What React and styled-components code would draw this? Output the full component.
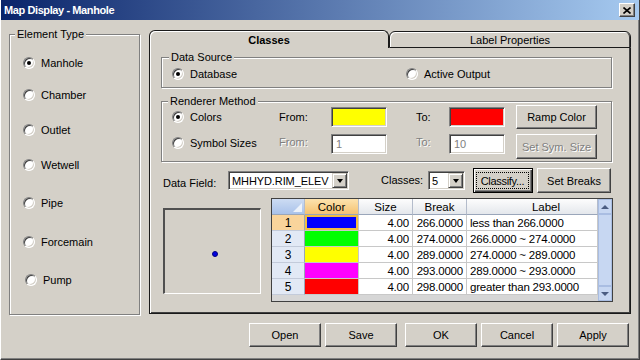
import React from "react";
import styled, { createGlobalStyle } from "styled-components";

const GlobalStyle = createGlobalStyle`
  html, body { margin: 0; padding: 0; background: #d4d0c8; }
  body { font-family: "Liberation Sans", Arial, sans-serif; font-size: 11px; color: #000; }
  * { box-sizing: border-box; }
`;

const Window = styled.div`
  width: 640px;
  height: 360px;
  background: #d4d0c8;
  border-left: 1px solid #fff;
  border-right: 1px solid #404040;
  border-bottom: 1px solid #404040;
  box-shadow: inset -1px -1px 0 #808080;
  display: flex;
  flex-direction: column;
  overflow: hidden;
`;

const TitleBar = styled.div`
  height: 20px;
  flex: none;
  display: flex;
  align-items: center;
  justify-content: space-between;
  padding: 0 4px 0 3px;
  background: linear-gradient(to right, #0a246a, #a6caf0);
  color: #fff;
  font-weight: bold;
  font-size: 11px;
  letter-spacing: -0.4px;
`;

const CloseButton = styled.div`
  width: 16px;
  height: 14px;
  background: #d4d0c8;
  border: 1px solid;
  border-color: #fff #404040 #404040 #fff;
  box-shadow: inset -1px -1px 0 #808080;
  display: flex;
  align-items: center;
  justify-content: center;
`;

const Main = styled.div`
  display: flex;
  align-items: flex-start;
  height: 295px;
  flex: none;
  padding: 8px 0 0 8px;
`;

const GroupBox = styled.div`
  flex: none;
  width: ${p => p.$w}px;
  height: ${p => p.$h}px;
  margin-top: ${p => p.$mt || 0}px;
  border: 1px solid #808080;
  box-shadow: 1px 1px 0 #fff, inset 1px 1px 0 #fff;
`;

const Caption = styled.div`
  width: fit-content;
  margin: -7px 0 0 ${p => p.$ml}px;
  padding: 0 2px;
  line-height: 13px;
  background: #d4d0c8;
`;

const RadioList = styled.div`
  display: flex;
  flex-direction: column;
  padding-left: 13px;
`;

const Option = styled.div`
  display: flex;
  align-items: center;
  gap: 6px;
  height: ${p => p.$h || 13}px;
  margin-top: ${p => p.$mt || 0}px;
  padding-left: ${p => p.$indent || 0}px;
  white-space: nowrap;
`;

const Radio = styled.span`
  flex: none;
  width: 12px;
  height: 12px;
  border-radius: 50%;
  border: 1px solid;
  border-color: #808080 #fff #fff #808080;
  background: #fff;
  box-shadow: inset 1px 1px 0 #404040, inset -1px -1px 0 #d4d0c8;
  display: flex;
  align-items: center;
  justify-content: center;
  &::after {
    content: "";
    width: 4px;
    height: 4px;
    border-radius: 50%;
    background: ${p => (p.$checked ? "#000" : "transparent")};
  }
`;

const Tabs = styled.div`
  flex: none;
  width: 482px;
  height: 284px;
  margin: 2px 0 0 9px;
  display: flex;
  flex-direction: column;
`;

const TabStrip = styled.div`
  display: flex;
  align-items: flex-end;
  height: 18px;
  flex: none;
`;

const Tab = styled.div`
  width: ${p => p.$w}px;
  height: ${p => (p.$active ? 18 : 17)}px;
  border: 1px solid #1a1a1a;
  border-bottom: ${p => (p.$active ? "none" : "1px solid #1a1a1a")};
  border-radius: 6px 6px 0 0;
  box-shadow: ${p => (p.$active ? "inset 1px 1px 0 #fff" : "inset 1px 1px 0 #fff, inset -1px 0 0 #404040")};
  display: flex;
  align-items: center;
  justify-content: center;
  font-weight: ${p => (p.$active ? "bold" : "normal")};
  padding-top: ${p => (p.$active ? 1 : 0)}px;
`;

const Panel = styled.div`
  flex: 1;
  border: 1px solid #1a1a1a;
  border-top: none;
  box-shadow: inset 1px 0 0 #fff, inset -1px -1px 0 #404040;
  padding: 9px 0 0 11px;
`;

const SourceRow = styled.div`
  display: grid;
  grid-template-columns: 234px auto;
  margin-top: 3px;
  padding-left: 10px;
`;

const RendererRow = styled.div`
  display: grid;
  grid-template-columns: 107px 52px 56px 29px 33px 56px 11px 81px;
  height: ${p => p.$h}px;
  align-items: ${p => p.$align};
  margin-top: ${p => p.$mt}px;
  padding-left: 10px;
`;

const Text = styled.span`
  line-height: ${p => p.$lh || 13}px;
  color: ${p => (p.$disabled ? "#808080" : "#000")};
  text-shadow: ${p => (p.$disabled ? "1px 1px 0 #fff" : "none")};
  width: ${p => (p.$w ? `${p.$w}px` : "auto")};
  margin-left: ${p => p.$ml || 0}px;
  padding-top: ${p => p.$pt || 0}px;
  flex: none;
  white-space: nowrap;
`;

const Sunken = styled.div`
  width: ${p => p.$w}px;
  height: ${p => p.$h}px;
  background: ${p => p.$bg || "#fff"};
  border: 1px solid;
  border-color: #808080 #fff #fff #808080;
  box-shadow: inset 1px 1px 0 #404040, inset -1px -1px 0 #d4d0c8;
  color: #808080;
  padding-left: 4px;
  line-height: 18px;
  flex: none;
  margin-left: ${p => p.$ml || 0}px;
`;

const Button = styled.div`
  flex: none;
  width: ${p => p.$w}px;
  height: ${p => p.$h || 24}px;
  margin-left: ${p => p.$ml || 0}px;
  display: flex;
  align-items: center;
  justify-content: center;
  background: #d4d0c8;
  border: 1px solid;
  border-color: ${p => (p.$focus ? "#000" : "#fff #404040 #404040 #fff")};
  box-shadow: ${p =>
    p.$focus
      ? "inset 1px 1px 0 #fff, inset -1px -1px 0 #404040, inset -2px -2px 0 #808080"
      : "inset -1px -1px 0 #808080"};
  color: ${p => (p.$disabled ? "#808080" : "#000")};
  text-shadow: ${p => (p.$disabled ? "1px 1px 0 #fff" : "none")};
  white-space: nowrap;
`;

const FocusRing = styled.span`
  flex: 1;
  align-self: stretch;
  margin: 3px 3px 3px 2px;
  border: 1px dotted #000;
  display: flex;
  align-items: center;
  justify-content: center;
  letter-spacing: -0.3px;
`;

const FieldRow = styled.div`
  display: flex;
  align-items: center;
  height: 25px;
  margin-top: 6px;
  padding-left: 2px;
`;

const Combo = styled.div`
  flex: none;
  width: ${p => p.$w}px;
  height: 19px;
  background: #fff;
  border: 1px solid;
  border-color: #808080 #fff #fff #808080;
  box-shadow: inset 1px 1px 0 #404040, inset -1px -1px 0 #d4d0c8;
  padding: 1px 1px 1px 3px;
  display: flex;
  align-items: center;
  justify-content: space-between;
  letter-spacing: -0.1px;
  white-space: nowrap;
`;

const DropButton = styled.div`
  flex: none;
  width: 15px;
  height: 15px;
  background: #d4d0c8;
  border: 1px solid;
  border-color: #d4d0c8 #404040 #404040 #d4d0c8;
  box-shadow: inset 1px 1px 0 #fff, inset -1px -1px 0 #808080;
  display: flex;
  align-items: center;
  justify-content: center;
  &::after {
    content: "";
    border-left: 3.5px solid transparent;
    border-right: 3.5px solid transparent;
    border-top: 4px solid #000;
  }
`;

const BottomRow = styled.div`
  display: flex;
  align-items: flex-start;
  margin-top: 5px;
`;

const Preview = styled.div`
  flex: none;
  width: 98px;
  height: 86px;
  margin: 10px 0 0 2px;
  border-style: solid;
  border-width: 2px 1px 1px 2px;
  border-color: #505050 #fff #fff #505050;
  display: flex;
  align-items: center;
  justify-content: center;
`;

const Dot = styled.span`
  width: 6px;
  height: 6px;
  margin: 5px 0 0 5px;
  border-radius: 50%;
  background: #0000e0;
  border: 1px solid #000080;
`;

const Grid = styled.div`
  flex: none;
  width: 342px;
  height: 104px;
  margin-left: 10px;
  border: 1px solid #404040;
  display: flex;
  background: #d6d6d6;
`;

const TableArea = styled.div`
  width: 326px;
  display: flex;
  flex-direction: column;
`;

const Table = styled.div`
  display: grid;
  grid-template-columns: 33px 54px 54px 54px 131px;
  grid-auto-rows: 16px;
  background: #fff;
`;

const headBg = {
  corner: "linear-gradient(#cddcf3, #a9c2ea)",
  sel: "linear-gradient(#fde3ae, #f4c272)",
  plain: "linear-gradient(#fdfdfd, #e4e7ec)",
};

const HeadCell = styled.div`
  background: ${p => headBg[p.$kind]};
  border-right: 1px solid #b4bccb;
  border-bottom: 1px solid #9aa6ba;
  display: flex;
  align-items: ${p => (p.$kind === "corner" ? "flex-end" : "center")};
  justify-content: ${p => (p.$kind === "corner" ? "flex-end" : "center")};
  padding: ${p => (p.$kind === "corner" ? "0 2px 2px 0" : `0 0 0 ${p.$pl || 0}px`)};
  font-size: 11.5px;
  &::after {
    content: "";
    display: ${p => (p.$kind === "corner" ? "block" : "none")};
    border-left: 9px solid transparent;
    border-bottom: 9px solid rgba(255, 255, 255, 0.75);
  }
`;

const RowHead = styled.div`
  background: ${p => (p.$sel ? "#f9d49b" : "#e2e9f5")};
  border-right: 1px solid #9aa6ba;
  border-bottom: 1px solid #c3cbda;
  display: flex;
  align-items: center;
  justify-content: center;
  font-size: 12px;
`;

const Cell = styled.div`
  border-right: 1px solid #c8c8c8;
  border-bottom: 1px solid #c8c8c8;
  background: ${p => p.$bg || "#fff"};
  box-shadow: ${p => (p.$focus ? "inset 0 0 0 2px #f1bd43" : "none")};
  display: flex;
  align-items: center;
  justify-content: ${p => (p.$left ? "flex-start" : "flex-end")};
  padding: 0 3px;
  white-space: nowrap;
  font-size: 11.5px;
  letter-spacing: -0.2px;
`;

const Filler = styled.div`
  flex: 1;
  background: #d6d6d6;
`;

const Scrollbar = styled.div`
  width: 14px;
  display: flex;
  flex-direction: column;
  background: #dbe5f6;
`;

const ScrollPart = styled.div`
  height: ${p => (p.$grow ? "auto" : "15px")};
  flex: ${p => (p.$grow ? 1 : "none")};
  background: #c7d7f2;
  border: 1px solid #a9bde2;
  display: flex;
  align-items: center;
  justify-content: center;
  &::after {
    content: "";
    display: ${p => (p.$dir ? "block" : "none")};
    border-left: 4px solid transparent;
    border-right: 4px solid transparent;
    border-${p => (p.$dir === "up" ? "bottom" : "top")}: 4px solid #4b5d82;
  }
`;

const Footer = styled.div`
  display: flex;
  justify-content: flex-end;
  gap: 4px;
  padding: 8px 10px 0 0;
`;

const elementTypes = [
  { name: "Manhole", mt: 15, checked: true },
  { name: "Chamber", mt: 19 },
  { name: "Outlet", mt: 22 },
  { name: "Wetwell", mt: 22 },
  { name: "Pipe", mt: 25 },
  { name: "Forcemain", mt: 26 },
  { name: "Pump", mt: 25, indent: 2 },
];

const classes = [
  { n: 1, color: "#0000ff", brk: "266.0000", label: "less than 266.0000" },
  { n: 2, color: "#00ff00", brk: "274.0000", label: "266.0000 ~ 274.0000" },
  { n: 3, color: "#ffff00", brk: "289.0000", label: "274.0000 ~ 289.0000" },
  { n: 4, color: "#ff00ff", brk: "293.0000", label: "289.0000 ~ 293.0000" },
  { n: 5, color: "#ff0000", brk: "298.0000", label: "greater than 293.0000" },
];

export default function App() {
  return (
    <>
      <GlobalStyle />
      <Window>
        <TitleBar>
          <span>Map Display - Manhole</span>
          <CloseButton>
            <svg width="8" height="7" viewBox="0 0 8 7">
              <path d="M0.5 0.5 L7.5 6.5 M7.5 0.5 L0.5 6.5" stroke="#000" strokeWidth="1.6" />
            </svg>
          </CloseButton>
        </TitleBar>

        <Main>
          <GroupBox $w={131} $h={281} $mt={6}>
            <Caption $ml={5}>Element Type</Caption>
            <RadioList>
              {elementTypes.map(t => (
                <Option key={t.name} $mt={t.mt} $indent={t.indent}>
                  <Radio $checked={t.checked} />
                  {t.name}
                </Option>
              ))}
            </RadioList>
          </GroupBox>

          <Tabs>
            <TabStrip>
              <Tab $w={240} $active>Classes</Tab>
              <Tab $w={242}>Label Properties</Tab>
            </TabStrip>
            <Panel>
              <GroupBox $w={451} $h={31}>
                <Caption $ml={7}>Data Source</Caption>
                <SourceRow>
                  <Option><Radio $checked />Database</Option>
                  <Option><Radio />Active Output</Option>
                </SourceRow>
              </GroupBox>

              <GroupBox $w={451} $h={61} $mt={13}>
                <Caption $ml={6}>Renderer Method</Caption>
                <RendererRow $h={24} $align="center" $mt={-3}>
                  <Option><Radio $checked />Colors</Option>
                  <Text>From:</Text>
                  <Sunken $w={56} $h={20} $bg="#ffff00" />
                  <span />
                  <Text>To:</Text>
                  <Sunken $w={56} $h={20} $bg="#ff0000" />
                  <span />
                  <Button $w={81}>Ramp Color</Button>
                </RendererRow>
                <RendererRow $h={25} $align="start" $mt={5}>
                  <Option $h={17}><Radio />Symbol Sizes</Option>
                  <Text $lh={17} $disabled>From:</Text>
                  <Sunken $w={56} $h={20}>1</Sunken>
                  <span />
                  <Text $lh={17} $disabled>To:</Text>
                  <Sunken $w={56} $h={20}>10</Sunken>
                  <span />
                  <Button $w={81} $h={25} $disabled>Set Sym. Size</Button>
                </RendererRow>
              </GroupBox>

              <FieldRow>
                <Text $w={65} $pt={5}>Data Field:</Text>
                <Combo $w={121}>
                  <span>MHHYD.RIM_ELEV</span>
                  <DropButton />
                </Combo>
                <Text $w={47} $ml={32}>Classes:</Text>
                <Combo $w={37}>
                  <span>5</span>
                  <DropButton />
                </Combo>
                <Button $w={60} $h={25} $ml={8} $focus>
                  <FocusRing>Classify...</FocusRing>
                </Button>
                <Button $w={74} $h={25} $ml={4}>Set Breaks</Button>
              </FieldRow>

              <BottomRow>
                <Preview>
                  <Dot />
                </Preview>
                <Grid>
                  <TableArea>
                    <Table>
                      <HeadCell $kind="corner" />
                      <HeadCell $kind="sel">Color</HeadCell>
                      <HeadCell $kind="plain">Size</HeadCell>
                      <HeadCell $kind="plain">Break</HeadCell>
                      <HeadCell $kind="plain" $pl={28}>Label</HeadCell>
                      {classes.map(c => (
                        <React.Fragment key={c.n}>
                          <RowHead $sel={c.n === 1}>{c.n}</RowHead>
                          <Cell $bg={c.color} $focus={c.n === 1} />
                          <Cell>4.00</Cell>
                          <Cell>{c.brk}</Cell>
                          <Cell $left>{c.label}</Cell>
                        </React.Fragment>
                      ))}
                    </Table>
                    <Filler />
                  </TableArea>
                  <Scrollbar>
                    <ScrollPart $dir="up" />
                    <ScrollPart $grow />
                    <ScrollPart $dir="down" />
                  </Scrollbar>
                </Grid>
              </BottomRow>
            </Panel>
          </Tabs>
        </Main>

        <Footer>
          <Button $w={72}>Open</Button>
          <Button $w={72}>Save</Button>
          <Button $w={72} $ml={4}>OK</Button>
          <Button $w={72}>Cancel</Button>
          <Button $w={72}>Apply</Button>
        </Footer>
      </Window>
    </>
  );
}
